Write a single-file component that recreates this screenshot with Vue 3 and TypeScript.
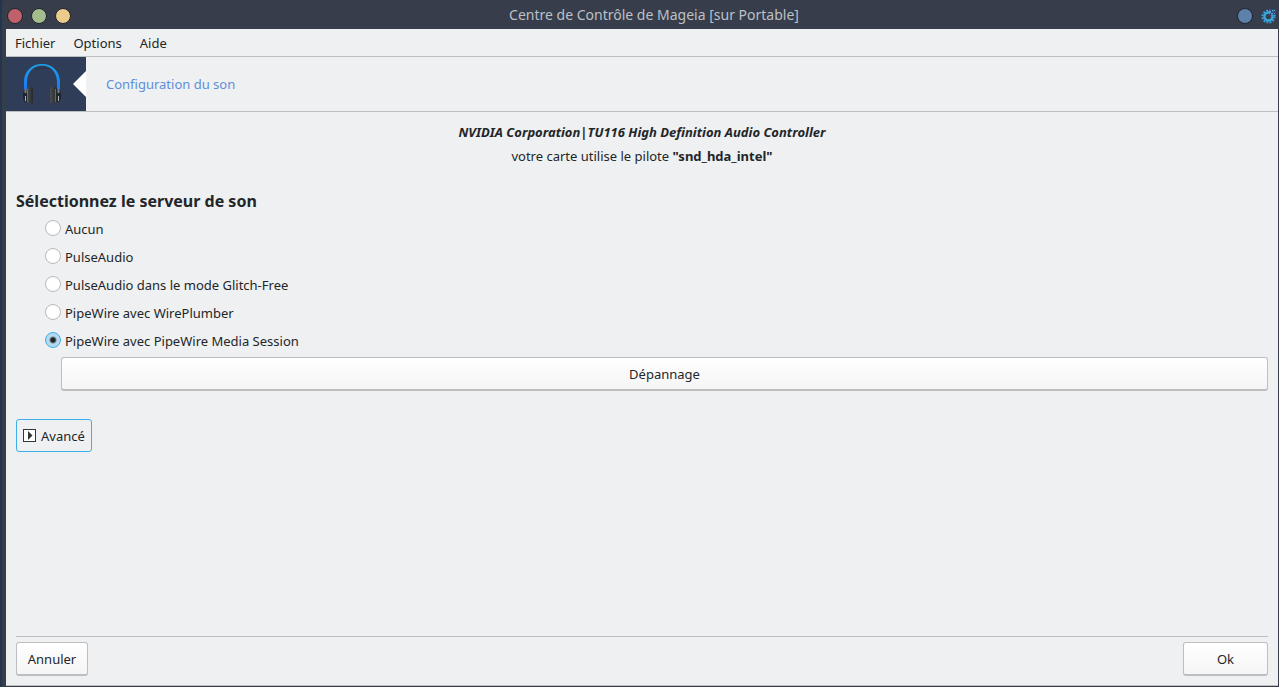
<script setup lang="ts">
import { ref } from 'vue'

interface SoundServer {
  id: string
  label: string
}

const menus: string[] = ['Fichier', 'Options', 'Aide']

const servers: SoundServer[] = [
  { id: 'none', label: 'Aucun' },
  { id: 'pulse', label: 'PulseAudio' },
  { id: 'pulse-gf', label: 'PulseAudio dans le mode Glitch-Free' },
  { id: 'pw-wp', label: 'PipeWire avec WirePlumber' },
  { id: 'pw-ms', label: 'PipeWire avec PipeWire Media Session' },
]

const selected = ref<string>('pw-ms')
</script>

<template>
  <div class="desktop">
    <div class="window">
      <header class="titlebar">
        <div class="controls">
          <button class="dot red" type="button" aria-label="Fermer"></button>
          <button class="dot green" type="button" aria-label="Agrandir"></button>
          <button class="dot yellow" type="button" aria-label="Réduire"></button>
        </div>
        <h1 class="title">Centre de Contrôle de Mageia [sur Portable]</h1>
        <div class="controls">
          <button class="dot blue" type="button" aria-label="Épingler"></button>
          <svg class="gear" viewBox="0 0 16 16" aria-hidden="true">
            <path d="M8 8 V1 H15 V8 Z" fill="#2f4a78" />
            <circle cx="7.500" cy="8.500" r="6" fill="none" stroke="#3aa5dc" stroke-width="2" stroke-dasharray="1.800 1.340" />
            <circle cx="7.500" cy="8.500" r="4" fill="none" stroke="#3aa5dc" stroke-width="2.400" />
            <path d="M9 7 V1 H15 V7 Z" fill="#2f4a78" />
            <path d="M8 3h2v2H8zM11 2h1.500v1.500H11zM10 5h2v1.500h-2zM13 5h1v1h-1zM13 2h1v1h-1z" fill="#5c9fd0" />
          </svg>
        </div>
      </header>

      <div class="client">
        <nav class="menubar">
          <button v-for="menu in menus" :key="menu" type="button" class="menu">{{ menu }}</button>
        </nav>

        <div class="banner">
          <div class="emblem">
            <svg class="headphones" viewBox="0 0 40 42" aria-hidden="true">
              <defs>
                <linearGradient id="band" x1="0" y1="0" x2="0" y2="1">
                  <stop offset="0" stop-color="#1ba5ee" />
                  <stop offset="1" stop-color="#1b78f5" />
                </linearGradient>
                <linearGradient id="pad" x1="0" y1="0" x2="1" y2="0">
                  <stop offset="0" stop-color="#4b4e50" />
                  <stop offset="1" stop-color="#26292b" />
                </linearGradient>
              </defs>
              <path d="M13 6 Q20 4 27 6" fill="none" stroke="#263148" stroke-width="1" />
              <path
                d="M2 26 V19 C2 8 10 1 20 1 S38 8 38 19 V26 H35 V19 C35 9 28.500 2.500 20 2.500 S5 9 5 19 V26 Z"
                fill="url(#band)"
              />
              <path d="M5 26 H3 Q1 28 1 31 V34 Q1 37 3 39 H5 Z" fill="#20242b" />
              <path d="M35 26 H37 Q39 28 39 31 V34 Q39 37 37 39 H35 Z" fill="#20242b" />
              <path d="M3.500 26V30M36.500 26V30" stroke="#737c86" stroke-width="2" />
              <path d="M3.500 33V38M36.500 33V38" stroke="#adb3b8" stroke-width="1" />
              <path d="M5 25 L7 24 H10 Q11 24 11 25 V39 Q11 41 9 40.500 L5 39 Z" fill="url(#pad)" />
              <path d="M35 25 L33 24 H30 Q28 24 28 25 V39 Q28 41 31 40.500 L35 39 Z" fill="url(#pad)" />
              <path d="M5.500 26V39M33.500 26V39" stroke="#686c6e" stroke-width="1" />
            </svg>
            <svg class="notch" viewBox="0 0 13 26" aria-hidden="true">
              <path d="M13 0 V26 L0 13 Z" fill="#ffffff" />
            </svg>
          </div>
          <h2 class="section">Configuration du son</h2>
        </div>

        <main class="content">
          <div class="card-info">
            <p class="device">NVIDIA Corporation|TU116 High Definition Audio Controller</p>
            <p>votre carte utilise le pilote <strong>"snd_hda_intel"</strong></p>
          </div>

          <fieldset class="servers">
            <legend class="heading">Sélectionnez le serveur de son</legend>
            <label v-for="server in servers" :key="server.id" class="option">
              <input v-model="selected" type="radio" name="server" :value="server.id" />
              <span>{{ server.label }}</span>
            </label>
          </fieldset>

          <button type="button" class="btn troubleshoot">Dépannage</button>

          <button type="button" class="advanced">
            <svg class="expander" viewBox="0 0 13 13" aria-hidden="true">
              <rect x="0.500" y="0.500" width="12" height="12" fill="#ffffff" stroke="#333537" />
              <path d="M5 2 L9.500 6.500 L5 11 Z" fill="#333537" />
            </svg>
            <span>Avancé</span>
          </button>

          <footer class="actions">
            <button type="button" class="btn">Annuler</button>
            <button type="button" class="btn ok">Ok</button>
          </footer>
        </main>
      </div>
    </div>
  </div>
</template>

<style>
html,
body {
  margin: 0;
}
</style>

<style scoped>
.desktop {
  box-sizing: border-box;
  min-height: 100vh;
  display: flex;
  padding-left: 2px;
  background: #24354f;
  color: #232629;
  font-family: 'Noto Sans', 'Open Sans', sans-serif;
  font-size: 13px;
  line-height: 18px;
}

.desktop * {
  box-sizing: border-box;
}

button {
  margin: 0;
  font: inherit;
  color: inherit;
}

h1,
h2,
p {
  margin: 0;
}

.window {
  flex: 1;
  display: flex;
  flex-direction: column;
  padding: 0 1px 1px 4px;
  background: #373d4a;
  border-top-left-radius: 3px;
}

.titlebar {
  display: flex;
  align-items: center;
  height: 29px;
}

.controls {
  display: flex;
  gap: 8px;
  align-items: center;
  padding: 2px 1px 0;
}

.dot {
  width: 16px;
  height: 16px;
  padding: 0;
  border: 1px solid #20242e;
  border-radius: 50%;
}

.red {
  background: #bf616a;
}

.green {
  background: #a3be8c;
}

.yellow {
  background: #ebcb8b;
}

.blue {
  background: #5e81ac;
}

.gear {
  width: 16px;
  height: 16px;
}

.title {
  flex: 1;
  text-align: center;
  color: #bcc0c8;
  font-size: 14px;
  font-weight: 400;
  line-height: 20px;
}

.client {
  flex: 1;
  display: flex;
  flex-direction: column;
  background: #eff0f1;
  border-bottom: 1px solid #bcbebf;
}

.menubar {
  display: flex;
  height: 28px;
  border-bottom: 1px solid #bcbebf;
}

.menu {
  padding: 0 9px;
  border: 0;
  background: none;
}

.banner {
  display: flex;
  align-items: center;
  height: 55px;
  border-bottom: 1px solid #bcbebf;
}

.emblem {
  display: flex;
  align-items: center;
  justify-content: flex-end;
  gap: 11px;
  width: 80px;
  height: 54px;
  background: #303d59;
}

.headphones {
  width: 40px;
  height: 42px;
}

.notch {
  width: 13px;
  height: 26px;
}

.section {
  padding-left: 20px;
  color: #5e8edb;
  font-size: 13px;
  font-weight: 400;
}

.content {
  flex: 1;
  display: flex;
  flex-direction: column;
  padding: 8px 10px 9px;
}

.card-info {
  display: flex;
  flex-direction: column;
  align-items: center;
  line-height: 24px;
}

.device {
  font-weight: 700;
  font-style: italic;
}

.servers {
  display: flex;
  flex-direction: column;
  margin: 20px 0 0;
  padding: 0;
  border: 0;
}

.heading {
  margin-bottom: 1px;
  padding: 0;
  font-size: 16px;
  font-weight: 700;
  line-height: 26px;
}

.option {
  display: flex;
  align-items: center;
  align-self: flex-start;
  gap: 4px;
  height: 28px;
  margin-left: 29px;
}

.option input {
  appearance: none;
  width: 16px;
  height: 16px;
  margin: 0 0 2px;
  border: 1px solid #b8babc;
  border-radius: 50%;
  background: #ffffff;
}

.option input:checked {
  border-color: #3daee9;
  background: radial-gradient(circle, #232629 0 2px, #b4d9ee 4px);
}

.btn {
  height: 34px;
  padding: 0 10px;
  border: 1px solid #bcbebf;
  border-bottom: 2px solid #bcbebf;
  border-radius: 3px;
  background: linear-gradient(#ffffff, #f5f5f6);
}

.troubleshoot {
  margin: 2px 0 0 45px;
}

.advanced {
  display: flex;
  align-items: center;
  align-self: flex-start;
  gap: 5px;
  height: 33px;
  margin-top: 28px;
  padding: 0 6px;
  border: 1px solid #3daee9;
  border-radius: 3px;
  background: #eff0f1;
}

.expander {
  width: 13px;
  height: 13px;
}

.actions {
  display: flex;
  justify-content: space-between;
  margin-top: auto;
  padding-top: 5px;
  border-top: 1px solid #bcbebf;
}

.actions .btn {
  min-width: 72px;
}

.actions .ok {
  width: 85px;
}
</style>
